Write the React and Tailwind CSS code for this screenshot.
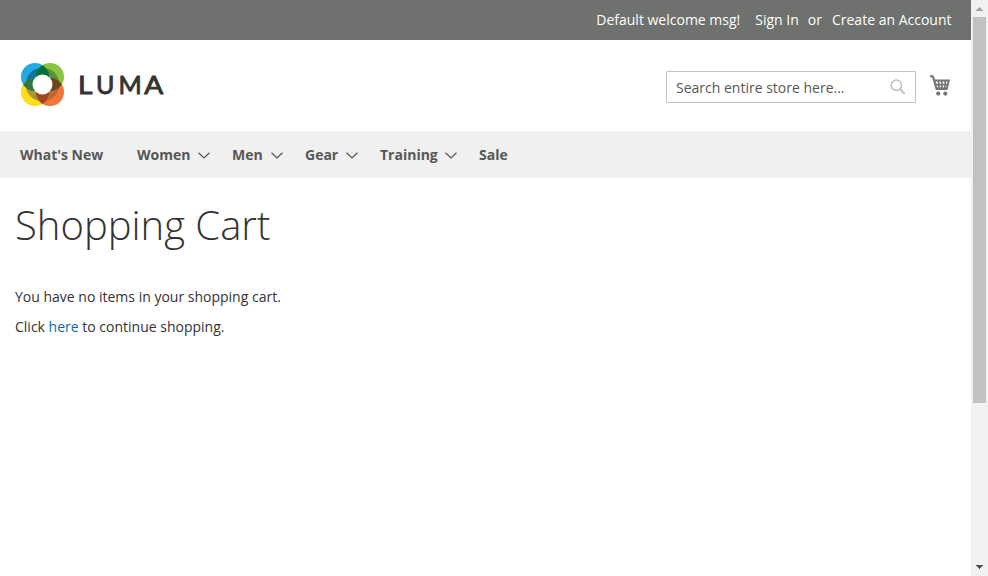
const navItems = [
  { label: "What's New", width: "w-[117px]" },
  { label: "Women", width: "w-[95px]", menu: true },
  { label: "Men", width: "w-[73px]", menu: true },
  { label: "Gear", width: "w-[75px]", menu: true },
  { label: "Training", width: "w-[99px]", menu: true },
  { label: "Sale", width: "w-[40px]" },
];

function Logo() {
  return (
    <svg width="148" height="50" viewBox="0 0 148 50" role="img" aria-label="Luma">
      <defs>
        <clipPath id="tl"><circle cx="17" cy="17" r="14" /></clipPath>
        <clipPath id="tr"><circle cx="32" cy="17" r="14" /></clipPath>
        <clipPath id="bl"><circle cx="17" cy="32" r="14" /></clipPath>
        <clipPath id="br"><circle cx="32" cy="32" r="14" /></clipPath>
      </defs>
      <circle cx="17" cy="17" r="14" fill="#26a8e0" />
      <circle cx="32" cy="17" r="14" fill="#8bc53f" />
      <circle cx="17" cy="32" r="14" fill="#ffde17" />
      <circle cx="32" cy="32" r="14" fill="#f3753a" />
      <circle cx="24.5" cy="24.5" r="16.8" fill="#0e76a0" clipPath="url(#tl)" />
      <circle cx="24.5" cy="24.5" r="16.8" fill="#56913d" clipPath="url(#tr)" />
      <circle cx="24.5" cy="24.5" r="16.8" fill="#a99534" clipPath="url(#bl)" />
      <circle cx="24.5" cy="24.5" r="16.8" fill="#bd6932" clipPath="url(#br)" />
      <g clipPath="url(#tl)">
        <circle cx="32" cy="17" r="14" fill="#006d3a" />
        <circle cx="17" cy="32" r="14" fill="#2e7741" />
      </g>
      <g clipPath="url(#br)">
        <circle cx="32" cy="17" r="14" fill="#67491f" />
        <circle cx="17" cy="32" r="14" fill="#a04623" />
      </g>
      <circle cx="24.5" cy="24.5" r="10" fill="#fff" />
      <g fill="#333" stroke="#333" strokeWidth="0.9" fontFamily="Lato, sans-serif" fontWeight="400" fontSize="25">
        <text transform="translate(60 34) scale(1.12 1)">L</text>
        <text x="78" y="34">U</text>
        <text x="100.5" y="34">M</text>
        <text transform="translate(126.2 34) scale(1.12 1)">A</text>
      </g>
    </svg>
  );
}

function CartIcon() {
  return (
    <svg width="21" height="22" viewBox="0 0 21 22" fill="none" stroke="#757575">
      <path d="M0.2 1.2 H1.6 Q2.8 1.4 3.4 3 L6.6 13.8 H17.3" strokeWidth="2.2" />
      <path d="M4.2 5.4 H18.8 L16.8 13.6 H7" strokeWidth="2" />
      <path d="M5.2 9.6 H18.2 M8.4 5 L9.1 14 M11.8 5 V14 M15.4 5 L14.6 14" strokeWidth="1.7" />
      <circle cx="8.2" cy="18.6" r="2.1" fill="#757575" stroke="none" />
      <circle cx="15.3" cy="18.6" r="2.1" fill="#757575" stroke="none" />
    </svg>
  );
}

function Scrollbar() {
  return (
    <div className="flex h-full w-[17px] shrink-0 flex-col items-center bg-[#f1f1f1]">
      <svg className="shrink-0" width="17" height="17" shapeRendering="crispEdges">
        <path d="M5 11 H12 L8.5 7 Z" fill="#a3a3a3" />
      </svg>
      <div className="h-[386px] w-[13px] bg-[#c1c1c1]" />
      <svg className="mt-auto shrink-0" width="17" height="17" shapeRendering="crispEdges">
        <path d="M5 6 H12 L8.5 10 Z" fill="#505050" />
      </svg>
    </div>
  );
}

export default function App() {
  return (
    <div className="flex h-[576px] w-[988px] overflow-hidden bg-white font-['Open_Sans',sans-serif] text-sm leading-5 text-[#333]">
      <div className="flex min-w-0 flex-1 flex-col">
        <div className="flex h-10 shrink-0 justify-end bg-[#6e716e] pt-2.5 pr-[19.5px] whitespace-nowrap text-white">
          <span>Default welcome msg!</span>
          <a className="ml-[15px]">Sign In</a>
          <span className="ml-[9px]">or</span>
          <a className="ml-[10px]">Create an Account</a>
        </div>
        <header className="flex h-[91px] shrink-0 items-start justify-between pr-5 pl-[18px]">
          <div className="pt-5"><Logo /></div>
          <div className="flex pt-[31px]">
            <div className="flex h-8 w-[250px] items-center justify-between rounded-[1px] border border-[#c2c2c2] pr-[9px] pl-[9px] text-[#575757]">
              <span className="pt-0.5">Search entire store here...</span>
              <svg width="16" height="16" viewBox="0 0 16 16" fill="none" stroke="#c2c2c2">
                <circle cx="6.4" cy="6.2" r="5.2" strokeWidth="1.6" />
                <path d="M10.2 10.2 L14.8 15" strokeWidth="2" />
              </svg>
            </div>
            <div className="ml-[14px] pt-1"><CartIcon /></div>
          </div>
        </header>
        <nav className="flex h-[47px] shrink-0 items-center bg-[#f0f0f0] pl-5 font-bold text-[#575757]">
          {navItems.map((item) => (
            <a key={item.label} className={`${item.width} flex shrink-0 items-center whitespace-nowrap`}>
              {item.label}
              {item.menu && (
                <svg className="mt-0.5 ml-auto mr-[22px]" width="12" height="7" viewBox="0 0 12 7" fill="none" stroke="#575757" strokeWidth="1.3">
                  <path d="M0.5 0.7 L6 5.9 L11.5 0.7" />
                </svg>
              )}
            </a>
          ))}
        </nav>
        <main className="pl-[15px]">
          <h1 className="mt-[25px] text-[40px] leading-[44px] font-light">Shopping Cart</h1>
          <p className="mt-[40px]">You have no items in your shopping cart.</p>
          <p className="mt-2.5">Click <a className="text-[#006bb4]">here</a> to continue shopping.</p>
        </main>
      </div>
      <Scrollbar />
    </div>
  );
}
